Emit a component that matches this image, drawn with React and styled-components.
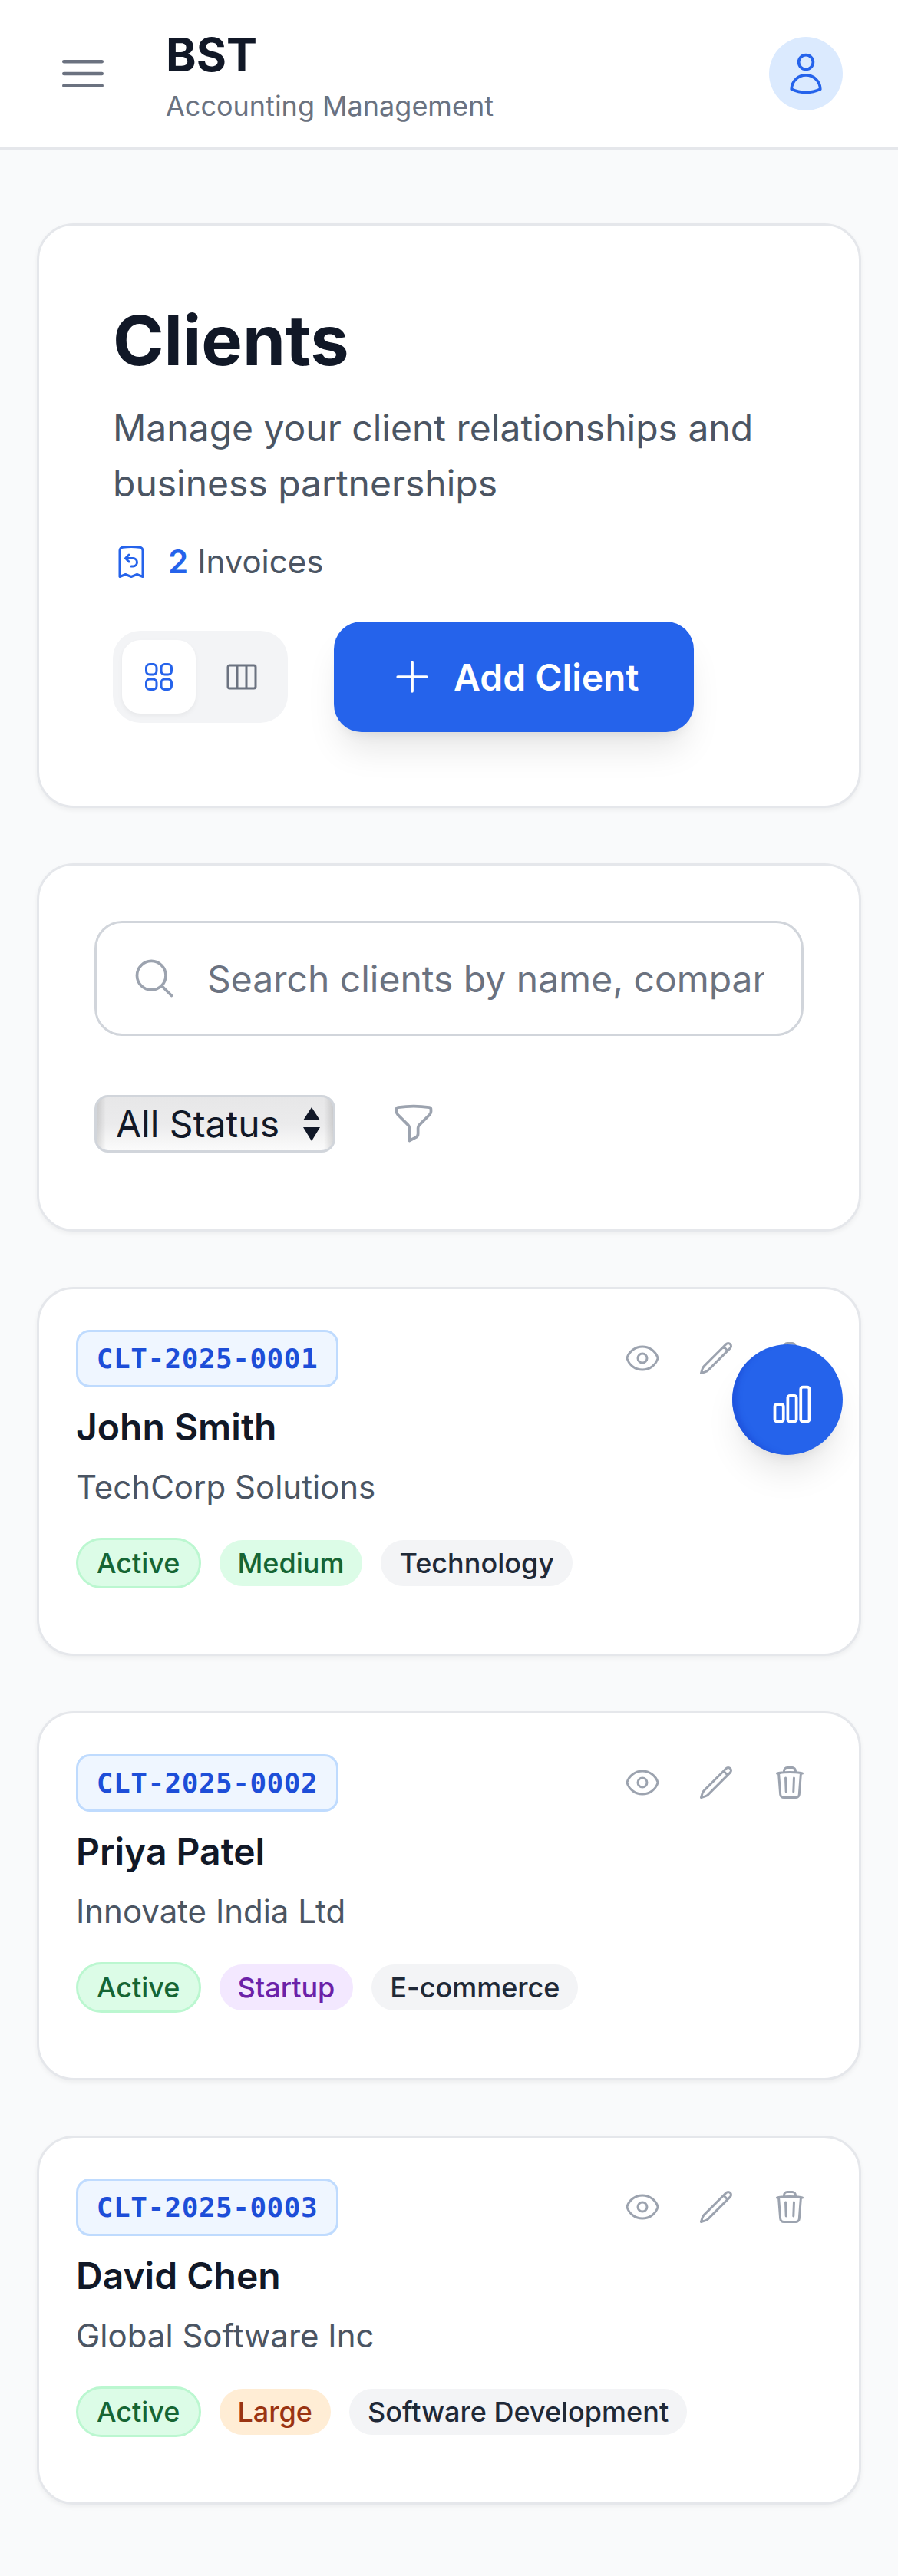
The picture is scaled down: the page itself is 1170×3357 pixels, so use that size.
import React from 'react'
import styled, { createGlobalStyle } from 'styled-components'

const GlobalStyle = createGlobalStyle`
  * { box-sizing: border-box; }
  body {
    margin: 0;
    background: #f9fafb;
    font-family: Inter, "Liberation Sans", sans-serif;
  }
`

const Page = styled.div`
  position: relative;
  width: 1170px;
  background: #f9fafb;
`

const Header = styled.header`
  display: flex;
  align-items: center;
  height: 195px;
  padding: 0 72px 0 48px;
  background: #fff;
  border-bottom: 3px solid #e5e7eb;
`

const MenuButton = styled.button`
  display: flex;
  padding: 24px;
  border: 0;
  background: none;
  color: #6b7280;
`

const Brand = styled.div`
  flex: 1;
  margin-left: 48px;
`

const BrandName = styled.h1`
  margin: 0;
  font-size: 60px;
  line-height: 84px;
  font-weight: 700;
  color: #111827;
`

const BrandSub = styled.p`
  margin: 0;
  font-size: 36px;
  line-height: 51px;
  color: #6b7280;
`

const Avatar = styled.div`
  display: flex;
  align-items: center;
  justify-content: center;
  width: 96px;
  height: 96px;
  border-radius: 50%;
  background: #dbeafe;
  color: #2563eb;
`

const Main = styled.main`
  display: flex;
  flex-direction: column;
  gap: 72px;
  padding: 96px 48px 93px;
`

const Card = styled.section`
  padding: ${props => props.$pad || 48}px;
  background: #fff;
  border: 3px solid #e5e7eb;
  border-radius: 48px;
  box-shadow: 0 3px 6px rgba(0, 0, 0, 0.05);
`

const Title = styled.h2`
  margin: 0 0 24px;
  font-size: 90px;
  line-height: 108px;
  font-weight: 700;
  color: #111827;
`

const Lead = styled.p`
  margin: 0;
  font-size: 48px;
  line-height: 72px;
  color: #4b5563;
`

const InvoiceRow = styled.div`
  display: flex;
  align-items: center;
  gap: 24px;
  margin-top: 36px;
  font-size: 42px;
  line-height: 60px;
  color: #4b5563;
`

const Count = styled.strong`
  margin-right: 12px;
  font-weight: 600;
  color: #2563eb;
`

const Actions = styled.div`
  display: flex;
  align-items: center;
  gap: 60px;
  margin-top: 48px;
`

const Toggle = styled.div`
  display: flex;
  gap: 12px;
  padding: 12px;
  border-radius: 36px;
  background: #f3f4f6;
`

const ToggleButton = styled.button`
  display: flex;
  padding: 24px;
  border: 0;
  border-radius: 24px;
  background: ${props => (props.$active ? '#fff' : 'transparent')};
  color: ${props => (props.$active ? '#2563eb' : '#6b7280')};
  box-shadow: ${props => (props.$active ? '0 3px 6px rgba(0,0,0,.05)' : 'none')};
`

const AddButton = styled.button`
  display: flex;
  align-items: center;
  gap: 24px;
  height: 144px;
  padding: 0 72px;
  border: 0;
  border-radius: 36px;
  background: #2563eb;
  color: #fff;
  font-family: inherit;
  font-size: 48px;
  font-weight: 600;
  box-shadow: 0 30px 45px -9px rgba(0, 0, 0, 0.1), 0 12px 18px -12px rgba(0, 0, 0, 0.1);
`

const SearchWrap = styled.div`
  position: relative;
  margin-bottom: 48px;
`

const SearchIcon = styled.span`
  position: absolute;
  left: 48px;
  top: 45px;
  display: flex;
  color: #9ca3af;
`

const SearchInput = styled.input`
  display: block;
  width: 100%;
  height: 150px;
  padding: 0 48px 0 144px;
  border: 3px solid #d1d5db;
  border-radius: 36px;
  background: #fff;
  font-family: inherit;
  font-size: 48px;
  color: #111827;
  &::placeholder { color: #6b7280; opacity: 1; }
`

const FilterRow = styled.div`
  display: flex;
  align-items: center;
  gap: 36px;
`

const SelectWrap = styled.div`
  position: relative;
  display: flex;
`

const StatusSelect = styled.select`
  appearance: none;
  width: 314px;
  height: 75px;
  padding: 0 0 0 25px;
  border: 3px solid #d1d5db;
  border-radius: 18px;
  background:
    linear-gradient(to right, rgba(0,0,0,.13), rgba(0,0,0,0) 12px, rgba(0,0,0,0) calc(100% - 12px), rgba(0,0,0,.13)),
    linear-gradient(#e7e7e8, #ebebec 50%, #fbfbfb);
  font-family: inherit;
  font-size: 48px;
  color: #111827;
`

const SelectArrows = styled.span`
  position: absolute;
  top: 16px;
  right: 20px;
  display: flex;
  color: #111827;
  pointer-events: none;
`

const IconButton = styled.button`
  display: flex;
  padding: ${props => props.$pad}px;
  border: 0;
  background: none;
  color: #9ca3af;
`

const CardTop = styled.div`
  display: flex;
  align-items: center;
  justify-content: space-between;
`

const Code = styled.span`
  width: 342px;
  padding: 3px 0;
  border: 3px solid #bfdbfe;
  border-radius: 18px;
  background: #eff6ff;
  font-family: "DejaVu Sans Mono", "Liberation Mono", monospace;
  font-size: 36px;
  line-height: 63px;
  font-weight: 700;
  letter-spacing: 0.5px;
  text-align: center;
  color: #1d4ed8;
`

const RowActions = styled.div`
  display: flex;
  gap: 12px;
`

const ClientName = styled.h3`
  margin: 12px 0 0;
  font-size: 48px;
  line-height: 72px;
  font-weight: 600;
  color: #111827;
`

const Company = styled.p`
  margin: 12px 0 0;
  font-size: 42px;
  line-height: 60px;
  color: #4b5563;
`

const Tags = styled.div`
  display: flex;
  align-items: center;
  gap: 24px;
  margin: 36px 0 37px;
`

const TAG_COLORS = {
  green: ['#dcfce7', '#166534'],
  gray: ['#f3f4f6', '#1f2937'],
  purple: ['#f3e8ff', '#6b21a8'],
  orange: ['#ffedd5', '#9a3412'],
}

const Tag = styled.span`
  padding: 6px 24px;
  border: ${props => (props.$bordered ? '3px solid #bbf7d0' : '0')};
  border-radius: 999px;
  background: ${props => TAG_COLORS[props.$tone][0]};
  color: ${props => TAG_COLORS[props.$tone][1]};
  font-size: 36px;
  line-height: 48px;
  font-weight: 500;
`

const Fab = styled.button`
  position: absolute;
  top: 1752px;
  right: 72px;
  display: flex;
  align-items: center;
  justify-content: center;
  width: 144px;
  height: 144px;
  padding: 12px 0 0 12px;
  border: 0;
  border-radius: 50%;
  background: #2563eb;
  color: #fff;
  box-shadow: inset 12px -3px 6px -6px rgba(29, 78, 216, 0.7), 0 30px 45px -9px rgba(0, 0, 0, 0.1), 0 12px 18px -12px rgba(0, 0, 0, 0.1);
`

const Icon = ({ size = 48, stroke = 1.5, children }) => (
  <svg width={size} height={size} viewBox="0 0 24 24" fill="none" stroke="currentColor" strokeWidth={stroke} strokeLinecap="round" strokeLinejoin="round">
    {children}
  </svg>
)

const clients = [
  { code: 'CLT-2025-0001', name: 'John Smith', company: 'TechCorp Solutions', size: 'Medium', tone: 'green', industry: 'Technology' },
  { code: 'CLT-2025-0002', name: 'Priya Patel', company: 'Innovate India Ltd', size: 'Startup', tone: 'purple', industry: 'E-commerce' },
  { code: 'CLT-2025-0003', name: 'David Chen', company: 'Global Software Inc', size: 'Large', tone: 'orange', industry: 'Software Development' },
]

const App = () => {
  return (
    <Page>
      <GlobalStyle />
      <Header>
        <MenuButton>
          <Icon size={72}><path d="M3.75 6.75h16.5M3.75 12h16.5m-16.5 5.25h16.5" /></Icon>
        </MenuButton>
        <Brand>
          <BrandName>BST</BrandName>
          <BrandSub>Accounting Management</BrandSub>
        </Brand>
        <Avatar>
          <Icon size={60}><path d="M15.75 6a3.75 3.75 0 1 1-7.5 0 3.75 3.75 0 0 1 7.5 0ZM4.501 20.118a7.5 7.5 0 0 1 14.998 0A17.933 17.933 0 0 1 12 21.75c-2.676 0-5.216-.584-7.499-1.632Z" /></Icon>
        </Avatar>
      </Header>

      <Main>
        <Card $pad={96}>
          <Title>Clients</Title>
          <Lead>Manage your client relationships and business partnerships</Lead>
          <InvoiceRow>
            <Icon><path d="M8.25 9.75h4.875a2.625 2.625 0 0 1 0 5.25H12M8.25 9.75 10.5 7.5M8.25 9.75 10.5 12m9-7.243V21.75l-3.75-1.5-3.75 1.5-3.75-1.5-3.75 1.5V4.757c0-1.108.806-2.057 1.907-2.185a48.507 48.507 0 0 1 11.186 0c1.1.128 1.907 1.077 1.907 2.185Z" stroke="#2563eb" /></Icon>
            <span><Count>2</Count>Invoices</span>
          </InvoiceRow>
          <Actions>
            <Toggle>
              <ToggleButton $active>
                <Icon><path d="M3.75 6A2.25 2.25 0 0 1 6 3.75h2.25A2.25 2.25 0 0 1 10.5 6v2.25a2.25 2.25 0 0 1-2.25 2.25H6a2.25 2.25 0 0 1-2.25-2.25V6ZM3.75 15.75A2.25 2.25 0 0 1 6 13.5h2.25a2.25 2.25 0 0 1 2.25 2.25V18a2.25 2.25 0 0 1-2.25 2.25H6A2.25 2.25 0 0 1 3.75 18v-2.25ZM13.5 6a2.25 2.25 0 0 1 2.25-2.25H18A2.25 2.25 0 0 1 20.25 6v2.25A2.25 2.25 0 0 1 18 10.5h-2.25a2.25 2.25 0 0 1-2.25-2.25V6ZM13.5 15.75a2.25 2.25 0 0 1 2.25-2.25H18a2.25 2.25 0 0 1 2.25 2.25V18A2.25 2.25 0 0 1 18 20.25h-2.25A2.25 2.25 0 0 1 13.5 18v-2.25Z" /></Icon>
              </ToggleButton>
              <ToggleButton>
                <Icon><path d="M9 4.5v15m6-15v15m-10.875 0h15.75c.621 0 1.125-.504 1.125-1.125V5.625c0-.621-.504-1.125-1.125-1.125H4.125C3.504 4.5 3 5.004 3 5.625v12.75c0 .621.504 1.125 1.125 1.125Z" /></Icon>
              </ToggleButton>
            </Toggle>
            <AddButton>
              <Icon size={60}><path d="M12 4.5v15m7.5-7.5h-15" /></Icon>
              Add Client
            </AddButton>
          </Actions>
        </Card>

        <Card $pad={72}>
          <SearchWrap>
            <SearchIcon>
              <Icon size={60}><path d="m21 21-5.197-5.197m0 0A7.5 7.5 0 1 0 5.196 5.196a7.5 7.5 0 0 0 10.607 10.607Z" /></Icon>
            </SearchIcon>
            <SearchInput placeholder="Search clients by name, company, or email..." />
          </SearchWrap>
          <FilterRow>
            <SelectWrap>
              <StatusSelect defaultValue="all">
                <option value="all">All Status</option>
                <option value="active">Active</option>
              </StatusSelect>
              <SelectArrows>
                <svg width="22" height="44" viewBox="0 0 22 44" fill="currentColor"><path d="M11 0l11 17H0zM11 44L0 26h22z" /></svg>
              </SelectArrows>
            </SelectWrap>
            <IconButton $pad={36}>
              <Icon size={60}><path d="M12 3c2.755 0 5.455.232 8.083.678.533.09.917.556.917 1.096v1.044a2.25 2.25 0 0 1-.659 1.591l-5.432 5.432a2.25 2.25 0 0 0-.659 1.591v2.927a2.25 2.25 0 0 1-1.244 2.013L9.75 21v-6.568a2.25 2.25 0 0 0-.659-1.591L3.659 7.409A2.25 2.25 0 0 1 3 5.818V4.774c0-.54.384-1.006.917-1.096A48.32 48.32 0 0 1 12 3Z" /></Icon>
            </IconButton>
          </FilterRow>
        </Card>

        {clients.map(client => (
          <Card key={client.code}>
            <CardTop>
              <Code>{client.code}</Code>
              <RowActions>
                <IconButton $pad={18}>
                  <Icon><path d="M2.036 12.322a1.012 1.012 0 0 1 0-.639C3.423 7.51 7.36 4.5 12 4.5c4.638 0 8.573 3.007 9.963 7.178.07.207.07.431 0 .639C20.577 16.49 16.64 19.5 12 19.5c-4.638 0-8.573-3.007-9.963-7.178Z" /><path d="M15 12a3 3 0 1 1-6 0 3 3 0 0 1 6 0Z" /></Icon>
                </IconButton>
                <IconButton $pad={18}>
                  <Icon><path d="m16.862 4.487 1.687-1.688a1.875 1.875 0 1 1 2.652 2.652L6.832 19.82a4.5 4.5 0 0 1-1.897 1.13l-2.685.8.8-2.685a4.5 4.5 0 0 1 1.13-1.897L16.863 4.487Zm0 0L19.5 7.125" /></Icon>
                </IconButton>
                <IconButton $pad={18}>
                  <Icon><path d="m14.74 9-.346 9m-4.788 0L9.26 9m9.968-3.21c.342.052.682.107 1.022.166m-1.022-.165L18.16 19.673a2.25 2.25 0 0 1-2.244 2.077H8.084a2.25 2.25 0 0 1-2.244-2.077L4.772 5.79m14.456 0a48.108 48.108 0 0 0-3.478-.397m-12 .562c.34-.059.68-.114 1.022-.165m0 0a48.11 48.11 0 0 1 3.478-.397m7.5 0v-.916c0-1.18-.91-2.164-2.09-2.201a51.964 51.964 0 0 0-3.32 0c-1.18.037-2.09 1.022-2.09 2.201v.916m7.5 0a48.667 48.667 0 0 0-7.5 0" /></Icon>
                </IconButton>
              </RowActions>
            </CardTop>
            <ClientName>{client.name}</ClientName>
            <Company>{client.company}</Company>
            <Tags>
              <Tag $tone="green" $bordered>Active</Tag>
              <Tag $tone={client.tone}>{client.size}</Tag>
              <Tag $tone="gray">{client.industry}</Tag>
            </Tags>
          </Card>
        ))}
      </Main>

      <Fab>
        <Icon size={60}><path d="M3 13.125C3 12.504 3.504 12 4.125 12h2.25c.621 0 1.125.504 1.125 1.125v6.75C7.5 20.496 6.996 21 6.375 21h-2.25A1.125 1.125 0 0 1 3 19.875v-6.75ZM9.75 8.625c0-.621.504-1.125 1.125-1.125h2.25c.621 0 1.125.504 1.125 1.125v11.25c0 .621-.504 1.125-1.125 1.125h-2.25a1.125 1.125 0 0 1-1.125-1.125V8.625ZM16.5 4.125c0-.621.504-1.125 1.125-1.125h2.25C20.496 3 21 3.504 21 4.125v15.75c0 .621-.504 1.125-1.125 1.125h-2.25a1.125 1.125 0 0 1-1.125-1.125V4.125Z" /></Icon>
      </Fab>
    </Page>
  )
}

export default App
